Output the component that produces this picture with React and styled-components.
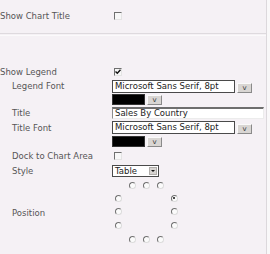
import React from 'react';
import styled, { createGlobalStyle } from 'styled-components';

const GlobalStyle = createGlobalStyle`
  html, body {
    margin: 0;
    background: #f9f8f9;
  }
  body {
    font-family: "DejaVu Sans", Verdana, sans-serif;
  }
`;

const Panel = styled.div`
  width: 267px;
  height: 254px;
  box-sizing: border-box;
  padding-top: 8px;
  background: #f5f1f5;
  border-right: 1px solid #dcd8dc;
  overflow: hidden;
`;

const Row = styled.div`
  display: flex;
  align-items: center;
  height: ${(props) => props.h}px;
  margin-top: ${(props) => props.mt || 0}px;
`;

const Label = styled.div`
  width: ${(props) => (props.indent ? 100 : 112)}px;
  padding-left: ${(props) => (props.indent ? 12 : 0)}px;
  flex-shrink: 0;
  font-size: 8.5px;
  color: #555;
  white-space: nowrap;
`;

const Separator = styled.div`
  margin-top: 9px;
  height: 1px;
  border-top: 1px solid #dedade;
  border-bottom: 1px solid #fbfafb;
`;

const Box = styled.span`
  position: relative;
  display: inline-block;
  width: 8px;
  height: 8px;
  margin-left: 2px;
  box-sizing: border-box;
  border-style: solid;
  border-width: 1px;
  border-color: #6f6f6f #e4e4e4 #e4e4e4 #6f6f6f;
  background: #f7f7f7;
`;

const Check = styled.svg`
  position: absolute;
  left: 0;
  top: 0;
`;

const Checkbox = ({ checked }) => (
  <Box>
    {checked && (
      <Check width="6" height="6" viewBox="0 0 6 6">
        <path d="M0.5 2.5 L2.3 4.3 L5.5 0.8" stroke="#111" strokeWidth="1.4" fill="none" />
      </Check>
    )}
  </Box>
);

const Control = styled.div`
  display: flex;
  align-items: flex-end;
  gap: 2px;
`;

const SelectBox = styled.div`
  width: ${(props) => props.w}px;
  height: 13px;
  box-sizing: border-box;
  border: 1px solid #4a4a4a;
  background: #fff;
  padding-left: 2px;
  font-size: 8.5px;
  line-height: 11px;
  color: #222;
  white-space: nowrap;
`;

const Swatch = styled.div`
  width: 33px;
  height: 11px;
  box-sizing: border-box;
  background: #000;
  border: 1px solid #333;
`;

const DropButton = styled.div`
  width: 15px;
  height: 10px;
  box-sizing: border-box;
  border-style: solid;
  border-width: 1px;
  border-color: #fafafa #8a8a8a #8a8a8a #fafafa;
  background: #d9d6d3;
  display: flex;
  justify-content: center;
  align-items: flex-end;
  font-size: 7px;
  line-height: 7px;
  color: #333;
`;

const TextInput = styled.div`
  width: 152px;
  height: 12px;
  box-sizing: border-box;
  border-style: solid;
  border-width: 2px 1px 1px 1px;
  border-color: #6e6e6e #ececec #ececec #8c8c8c;
  background: #fff;
  padding-left: 2px;
  font-size: 8.5px;
  line-height: 9px;
  color: #222;
`;

const NativeSelect = styled.div`
  width: 47px;
  height: 12px;
  box-sizing: border-box;
  border: 1px solid #4a4a4a;
  background: #fff;
  display: flex;
  align-items: center;
  justify-content: space-between;
  padding: 0 1px 0 2px;
  font-size: 8.5px;
  color: #222;
`;

const Arrow = styled.span`
  width: 8px;
  height: 8px;
  box-sizing: border-box;
  background: #d7d4d1;
  border: 1px solid #b0adaa;
  display: flex;
  align-items: center;
  justify-content: center;
  &::after {
    content: '';
    border-left: 2px solid transparent;
    border-right: 2px solid transparent;
    border-top: 2px solid #111;
  }
`;

const PositionGrid = styled.div`
  display: grid;
  grid-template-columns: 13px 14px 14px 14px 14px;
  grid-template-rows: 13px 12px 15px 13px 15px;
  place-items: center;
`;

const Radio = styled.span`
  grid-column: ${(props) => props.c};
  grid-row: ${(props) => props.r};
  width: 7px;
  height: 7px;
  box-sizing: border-box;
  border-radius: 50%;
  border: 1px solid;
  border-color: #707070 #dcdcdc #dcdcdc #707070;
  background: #fbfbfb;
  display: flex;
  align-items: center;
  justify-content: center;
  &::after {
    content: '';
    width: 2px;
    height: 2px;
    border-radius: 50%;
    background: ${(props) => (props.checked ? '#111' : 'transparent')};
  }
`;

const radios = [
  { c: 2, r: 1 }, { c: 3, r: 1 }, { c: 4, r: 1 },
  { c: 1, r: 2 }, { c: 5, r: 2, checked: true },
  { c: 1, r: 3 }, { c: 5, r: 3 },
  { c: 1, r: 4 }, { c: 5, r: 4 },
  { c: 2, r: 5 }, { c: 3, r: 5 }, { c: 4, r: 5 },
];

const FontSelect = () => (
  <Control>
    <SelectBox w={123}>Microsoft Sans Serif, 8pt</SelectBox>
    <DropButton>v</DropButton>
  </Control>
);

const ColorPicker = () => (
  <Control>
    <Swatch />
    <DropButton>v</DropButton>
  </Control>
);

const App = () => (
  <Panel>
    <GlobalStyle />
    <Row h={16}>
      <Label>Show Chart Title</Label>
      <Checkbox />
    </Row>
    <Separator />
    <Row h={14} mt={29}>
      <Label>Show Legend</Label>
      <Checkbox checked />
    </Row>
    <Row h={14}>
      <Label indent>Legend Font</Label>
      <FontSelect />
    </Row>
    <Row h={13}>
      <Label indent />
      <ColorPicker />
    </Row>
    <Row h={14}>
      <Label indent>Title</Label>
      <TextInput>Sales By Country</TextInput>
    </Row>
    <Row h={15}>
      <Label indent>Title Font</Label>
      <FontSelect />
    </Row>
    <Row h={13}>
      <Label indent />
      <ColorPicker />
    </Row>
    <Row h={16}>
      <Label indent>Dock to Chart Area</Label>
      <Checkbox />
    </Row>
    <Row h={13}>
      <Label indent>Style</Label>
      <NativeSelect>
        Table
        <Arrow />
      </NativeSelect>
    </Row>
    <Row h={68} mt={2}>
      <Label indent>Position</Label>
      <PositionGrid>
        {radios.map((r) => (
          <Radio key={`${r.c}-${r.r}`} {...r} />
        ))}
      </PositionGrid>
    </Row>
  </Panel>
);

export default App;
